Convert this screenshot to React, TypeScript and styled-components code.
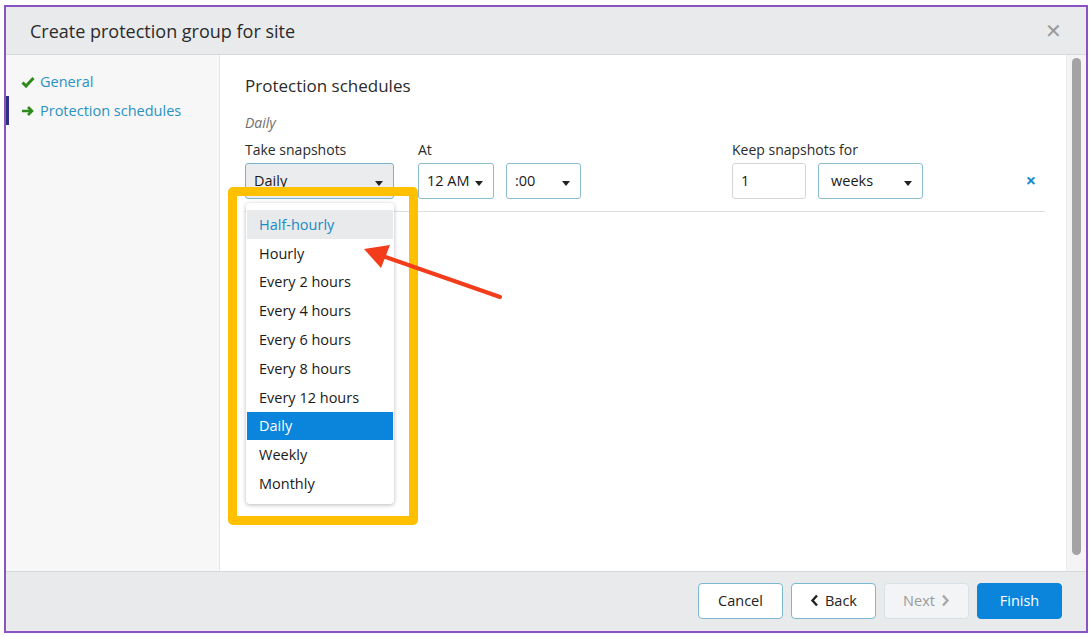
import * as React from 'react';
import styled, { createGlobalStyle } from 'styled-components';

const GlobalStyle = createGlobalStyle`
	html, body {
		margin: 0;
		padding: 0;
		background: #ffffff;
		font-family: "Open Sans", Lato, sans-serif;
		color: #222;
	}
`;

const Page = styled.div`
	width: 1091px;
	height: 637px;
	box-sizing: border-box;
	padding: 5px 3px 4px 4px;
`;

const Modal = styled.div`
	height: 100%;
	box-sizing: border-box;
	border: 2px solid #8b52c3;
	display: flex;
	flex-direction: column;
	background: #fff;
`;

const Header = styled.div`
	height: 48px;
	flex: none;
	background: #e8eaeb;
	border-bottom: 1px solid #d6d9db;
	display: flex;
	align-items: center;
	justify-content: space-between;
	padding: 0 24px 0 24px;
	box-sizing: border-box;
`;

const Title = styled.h1`
	margin: 0;
	font-size: 18px;
	font-weight: 400;
	color: #2b2b2b;
`;

const CloseX = styled.span`
	font-size: 20px;
	color: #9a9a9a;
	font-weight: 300;
	line-height: 1;
`;

const Body = styled.div`
	flex: 1;
	display: flex;
	min-height: 0;
`;

const Sidebar = styled.div`
	width: 214px;
	flex: none;
	background: #f8f7f7;
	border-right: 1px solid #e6e6e6;
	padding-top: 12px;
	box-sizing: border-box;
`;

const NavItem = styled.div<{ $active?: boolean }>`
	display: flex;
	align-items: center;
	gap: 5px;
	height: 29px;
	padding-left: 12px;
	font-size: 14.5px;
	color: #2a92c4;
	border-left: 3px solid ${p => (p.$active ? '#2e2f7d' : 'transparent')};
`;

const Content = styled.div`
	position: relative;
	flex: 1;
	padding: 20px 20px 0 25px;
`;

const Heading = styled.h2`
	margin: 0;
	font-size: 17px;
	font-weight: 400;
	color: #2b2b2b;
	line-height: 22px;
`;

const SubTitle = styled.div`
	margin-top: 17px;
	font-size: 14px;
	font-style: italic;
	color: #6f6f6f;
	line-height: 18px;
`;

const FormRow = styled.div`
	display: flex;
	align-items: flex-start;
	margin-top: 9px;
	padding-bottom: 12px;
	border-bottom: 1px solid #dedede;
	width: 800px;
`;

const Field = styled.div<{ $ml?: number }>`
	position: relative;
	margin-left: ${p => p.$ml ?? 0}px;
	display: flex;
	flex-direction: column;
`;

const Label = styled.div`
	font-size: 14px;
	color: #2b2b2b;
	line-height: 18px;
	margin-bottom: 4px;
`;

const Controls = styled.div`
	display: flex;
	gap: 12px;
`;

const SelectBox = styled.div<{ $w: number; $open?: boolean; $pl?: number }>`
	width: ${p => p.$w}px;
	height: 36px;
	box-sizing: border-box;
	border: 1px solid ${p => (p.$open ? '#7bb2cb' : '#8bbdd3')};
	border-radius: 3px;
	background: ${p => (p.$open ? '#ebeced' : '#fff')};
	display: flex;
	align-items: center;
	justify-content: space-between;
	padding: 0 10px 2px ${p => p.$pl ?? 8}px;
	font-size: 14.5px;
	color: #1a1a1a;
`;

const Caret = styled.span`
	width: 0;
	height: 0;
	margin-top: 6px;
	border-left: 4px solid transparent;
	border-right: 4px solid transparent;
	border-top: 5px solid #222;
`;

const TextInput = styled.div`
	width: 74px;
	height: 36px;
	box-sizing: border-box;
	border: 1px solid #d2d6d8;
	border-radius: 3px;
	padding: 0 8px 2px;
	display: flex;
	align-items: center;
	font-size: 14.5px;
	color: #1a1a1a;
`;

const RemoveX = styled.span`
	margin-left: auto;
	margin-right: 9px;
	margin-top: 27px;
	font-size: 18px;
	font-weight: 700;
	color: #1b8bd0;
`;

const Menu = styled.div`
	position: absolute;
	left: 1px;
	top: 62px;
	width: 148px;
	padding: 7px 1px 6px;
	box-sizing: border-box;
	background: #fff;
	border-radius: 4px;
	box-shadow: 0 1px 4px rgba(0, 0, 0, 0.28);
	z-index: 2;
`;

const MenuItem = styled.div<{ $state?: 'hover' | 'selected' }>`
	height: 28.8px;
	display: flex;
	align-items: center;
	padding-left: 12px;
	font-size: 14.5px;
	color: ${p => (p.$state === 'hover' ? '#1a8ac5' : p.$state === 'selected' ? '#fff' : '#1a1a1a')};
	background: ${p => (p.$state === 'hover' ? '#e8eaeb' : p.$state === 'selected' ? '#0a85db' : 'transparent')};
`;

const Highlight = styled.div`
	position: absolute;
	left: -17px;
	top: 46px;
	width: 190px;
	height: 338px;
	box-sizing: border-box;
	border: 9px solid #ffc000;
	border-radius: 5px;
	z-index: 3;
	pointer-events: none;
`;

const ArrowLayer = styled.svg`
	position: absolute;
	left: 0;
	top: 0;
	width: 400px;
	height: 300px;
	z-index: 4;
	pointer-events: none;
`;

const Scrollbar = styled.div`
	width: 20px;
	flex: none;
	background: #f4f4f4;
	border-left: 1px solid #ececec;
	display: flex;
	justify-content: center;
	padding: 3px 0 16px;
	box-sizing: border-box;
`;

const Thumb = styled.div`
	width: 9px;
	height: 100%;
	border-radius: 5px;
	background: #a3a3a3;
`;

const Footer = styled.div`
	height: 60px;
	flex: none;
	background: #e8eaeb;
	border-top: 1px solid #d6d9db;
	display: flex;
	align-items: center;
	justify-content: flex-end;
	gap: 8px;
	padding: 0 24px 2px 0;
	box-sizing: border-box;
`;

const Button = styled.button<{ $variant?: 'primary' | 'disabled' }>`
	width: 85px;
	height: 36px;
	box-sizing: border-box;
	border-radius: 4px;
	font-family: inherit;
	font-size: 14.5px;
	display: flex;
	align-items: center;
	justify-content: center;
	gap: 6px;
	border: 1px solid
		${p => (p.$variant === 'primary' ? '#0a85db' : p.$variant === 'disabled' ? '#d5e2e8' : '#7ab8cf')};
	background: ${p => (p.$variant === 'primary' ? '#0a85db' : p.$variant === 'disabled' ? '#f2f4f5' : '#fff')};
	color: ${p => (p.$variant === 'primary' ? '#fff' : p.$variant === 'disabled' ? '#9a9a9a' : '#222')};
`;

const options = [
	'Half-hourly',
	'Hourly',
	'Every 2 hours',
	'Every 4 hours',
	'Every 6 hours',
	'Every 8 hours',
	'Every 12 hours',
	'Daily',
	'Weekly',
	'Monthly'
];

const Check = () => (
	<svg width="14" height="12" viewBox="0 0 14 12">
		<path d="M1.5 6.5 L5 10 L12.5 2" fill="none" stroke="#2f8a1e" strokeWidth="3" />
	</svg>
);

const RightArrow = () => (
	<svg width="14" height="12" viewBox="0 0 14 12">
		<path d="M1 6 H11 M7 2 L11 6 L7 10" fill="none" stroke="#2f8a1e" strokeWidth="2.6" />
	</svg>
);

const Chevron = ({ dir, color }: { dir: 'left' | 'right'; color: string }) => (
	<svg width="9" height="13" viewBox="0 0 9 13">
		<path
			d={dir === 'left' ? 'M7 1.5 L2.5 6.5 L7 11.5' : 'M2 1.5 L6.5 6.5 L2 11.5'}
			fill="none"
			stroke={color}
			strokeWidth="2.4"
		/>
	</svg>
);

export default function App() {
	return (
		<>
			<GlobalStyle />
			<Page>
				<Modal>
					<Header>
						<Title>Create protection group for site</Title>
						<CloseX>✕</CloseX>
					</Header>
					<Body>
						<Sidebar>
							<NavItem>
								<Check />
								General
							</NavItem>
							<NavItem $active>
								<RightArrow />
								Protection schedules
							</NavItem>
						</Sidebar>
						<Content>
							<Heading>Protection schedules</Heading>
							<SubTitle>Daily</SubTitle>
							<FormRow>
								<Field>
									<Label>Take snapshots</Label>
									<SelectBox $w={149} $open>
										Daily
										<Caret />
									</SelectBox>
									<Menu>
										{options.map(o => (
											<MenuItem
												key={o}
												$state={o === 'Half-hourly' ? 'hover' : o === 'Daily' ? 'selected' : undefined}
											>
												{o}
											</MenuItem>
										))}
									</Menu>
									<Highlight />
								</Field>
								<Field $ml={24}>
									<Label>At</Label>
									<Controls>
										<SelectBox $w={76}>
											12 AM
											<Caret />
										</SelectBox>
										<SelectBox $w={75}>
											:00
											<Caret />
										</SelectBox>
									</Controls>
								</Field>
								<Field $ml={151}>
									<Label>Keep snapshots for</Label>
									<Controls>
										<TextInput>1</TextInput>
										<SelectBox $w={105} $pl={12}>
											weeks
											<Caret />
										</SelectBox>
									</Controls>
								</Field>
								<RemoveX>×</RemoveX>
							</FormRow>
							<ArrowLayer viewBox="0 0 400 300">
								<line x1="280" y1="242" x2="160" y2="200" stroke="#f23c1c" strokeWidth="4" strokeLinecap="round" />
								<polygon points="144,194 170,190 161,213" fill="#f23c1c" />
							</ArrowLayer>
						</Content>
						<Scrollbar>
							<Thumb />
						</Scrollbar>
					</Body>
					<Footer>
						<Button>Cancel</Button>
						<Button>
							<Chevron dir="left" color="#222" />
							Back
						</Button>
						<Button $variant="disabled">
							Next
							<Chevron dir="right" color="#a8a8a8" />
						</Button>
						<Button $variant="primary">Finish</Button>
					</Footer>
				</Modal>
			</Page>
		</>
	);
}
